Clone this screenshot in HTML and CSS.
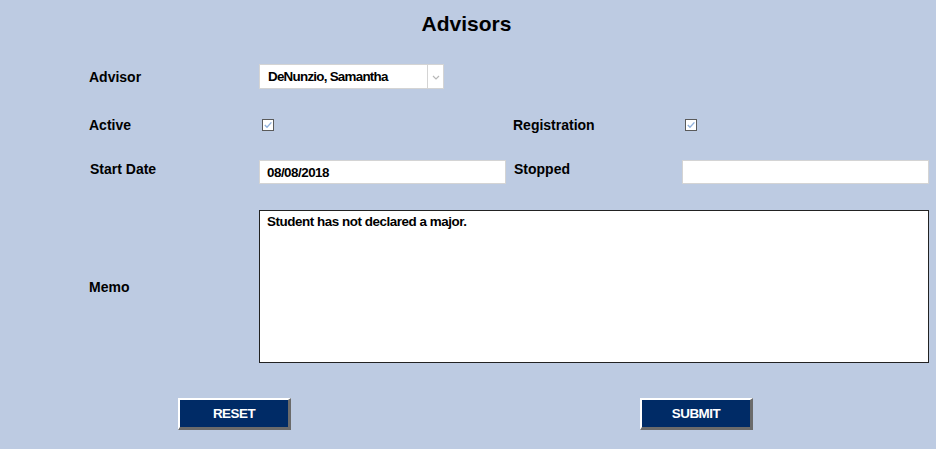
FILE: index.html
```html
<!DOCTYPE html>
<html lang="en">
<head>
<meta charset="utf-8">
<title>Advisors</title>
<link rel="stylesheet" href="styles.css">
</head>
<body>
<div class="page">
  <h1 class="title">Advisors</h1>
  <form class="form">
    <div class="row row-advisor">
      <label class="label">Advisor</label>
      <div class="select">
        <span class="select-value">DeNunzio, Samantha</span>
        <span class="select-arrow">
          <svg width="8" height="5" viewBox="0 0 8 5"><path d="M1 1 L4 4 L7 1" fill="none" stroke="#b8b8b8" stroke-width="1.2"/></svg>
        </span>
      </div>
    </div>
    <div class="row row-check">
      <label class="label">Active</label>
      <span class="check">
        <svg width="12" height="12" viewBox="0 0 12 12"><rect x="0.5" y="0.5" width="11" height="11" fill="#fff" stroke="#5a5a5a"/><path d="M2.8 6 L5 8.2 L9.4 3.4" fill="none" stroke="#8fb0dc" stroke-width="1.4"/></svg>
      </span>
      <span></span>
      <label class="label">Registration</label>
      <span class="check">
        <svg width="12" height="12" viewBox="0 0 12 12"><rect x="0.5" y="0.5" width="11" height="11" fill="#fff" stroke="#5a5a5a"/><path d="M2.8 6 L5 8.2 L9.4 3.4" fill="none" stroke="#8fb0dc" stroke-width="1.4"/></svg>
      </span>
    </div>
    <div class="row row-date">
      <label class="label label-top">Start Date</label>
      <input class="input" type="text" value="08/08/2018">
      <span></span>
      <label class="label label-top">Stopped</label>
      <input class="input" type="text" value="">
    </div>
    <div class="row row-memo">
      <label class="label">Memo</label>
      <textarea class="memo">Student has not declared a major.</textarea>
    </div>
    <div class="buttons">
      <button type="reset" class="btn">RESET</button>
      <button type="button" class="btn">SUBMIT</button>
    </div>
  </form>
</div>
</body>
</html>
```

FILE: styles.css
```css
* { box-sizing: border-box; }
html, body {
  margin: 0;
  padding: 0;
  background: #bdcbe2;
}
body {
  font-family: "Liberation Sans", Arial, sans-serif;
  font-weight: bold;
  font-size: 14px;
  color: #000;
}
.page {
  width: 936px;
  height: 449px;
}
.title {
  margin: 12px 3px 0 0;
  font-size: 21px;
  line-height: 24px;
  text-align: center;
}
.form {
  padding-left: 89px;
  margin: 0;
}
.row {
  display: grid;
  grid-template-columns: 170px 247px 7px 169px 247px;
  align-items: center;
}
.row-advisor { margin-top: 28px; height: 25px; }
.row-check { margin-top: 21px; height: 30px; }
.row-date { margin-top: 20px; height: 24px; }
.row-memo { margin-top: 26px; height: 153px; }
.label {
  font-size: 14px;
  line-height: 16px;
}
.label-top {
  align-self: start;
  padding-left: 1px;
  margin-top: 1px;
}
.select {
  display: flex;
  width: 185px;
  height: 25px;
  background: #fff;
  border: 1px solid #d4d4d4;
}
.select-value {
  flex: 1;
  padding-left: 8px;
  line-height: 24px;
  font-size: 13.4px;
  letter-spacing: -0.75px;
}
.select-arrow {
  width: 16px;
  border-left: 1px solid #d4d4d4;
  display: flex;
  align-items: center;
  justify-content: center;
  padding-top: 2px;
}
.check {
  display: flex;
  padding-left: 3px;
  height: 12px;
}
.check svg { display: block; }
.input {
  width: 247px;
  height: 24px;
  border: 1px solid #d4d4d4;
  background: #fff;
  padding: 1px 7px 0;
  font-family: "Liberation Sans", Arial, sans-serif;
  font-weight: bold;
  font-size: 13.4px;
  letter-spacing: -0.5px;
  color: #000;
  outline: none;
}
.memo {
  grid-column: 2 / 6;
  width: 670px;
  height: 153px;
  border: 1px solid #222;
  background: #fff;
  padding: 3px 7px;
  font-family: "Liberation Sans", Arial, sans-serif;
  font-weight: bold;
  font-size: 13.4px;
  letter-spacing: -0.45px;
  line-height: 15px;
  color: #000;
  resize: none;
  outline: none;
  margin: 0;
}
.buttons {
  display: flex;
  gap: 349px;
  padding-left: 89px;
  margin-top: 35px;
}
.btn {
  width: 113px;
  height: 32px;
  background: #002b66;
  color: #fff;
  font-family: "Liberation Sans", Arial, sans-serif;
  font-weight: bold;
  font-size: 13.4px;
  letter-spacing: -0.5px;
  border-style: solid;
  border-width: 2px 3px 3px 2px;
  border-color: #fff #6b6b6b #6b6b6b #fff;
  padding: 0;
  cursor: pointer;
}
```
